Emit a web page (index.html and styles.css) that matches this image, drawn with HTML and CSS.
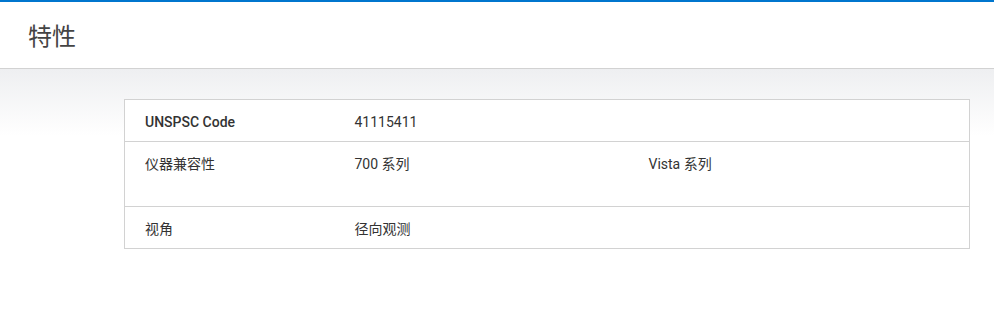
FILE: index.html
```html
<!DOCTYPE html>
<html lang="zh-CN">
<head>
  <meta charset="UTF-8">
  <title>特性</title>
  <link rel="stylesheet" href="styles.css">
</head>
<body>

<div class="page-head">
  <h1>特性</h1>
</div>

<div class="specs">
  <table class="spec-table">
    <colgroup>
      <col class="col-label">
      <col class="col-value">
      <col>
    </colgroup>
    <tr>
      <th>UNSPSC Code</th>
      <td>41115411</td>
      <td></td>
    </tr>
    <tr class="tall">
      <td>仪器兼容性</td>
      <td>700 系列</td>
      <td>Vista 系列</td>
    </tr>
    <tr>
      <td>视角</td>
      <td>径向观测</td>
      <td></td>
    </tr>
  </table>
</div>

</body>
</html>
```

FILE: styles.css
```css
body {
  margin: 0;
  font-family: Roboto, "Noto Sans CJK SC", sans-serif;
  font-size: 14px;
  color: #333;
  background: #fff;
}
.page-head {
  border-top: 2px solid #0076ce;
  border-bottom: 1px solid #d2d2d2;
  height: 66px;
  padding-left: 28px;
  display: flex;
  align-items: center;
}
.page-head h1 {
  margin: 0 0 2px 0;
  font-weight: normal;
  font-size: 24px;
  color: #444;
}
.specs {
  background: linear-gradient(#eeeff1, #fff 67px);
  padding: 30px 24px 60px 124px;
}
.spec-table {
  width: 100%;
  table-layout: fixed;
  border-collapse: collapse;
  background: #fff;
  border: 1px solid #d2d2d2;
}
.col-label {
  width: 230px;
}
.col-value {
  width: 294px;
}
.spec-table tr {
  border-top: 1px solid #d2d2d2;
}
.spec-table th,
.spec-table td {
  text-align: left;
  vertical-align: top;
  padding: 14px 0 11px 0;
  height: 16px;
  line-height: 16px;
}
.spec-table th {
  font-weight: 500;
  padding-left: 20px;
}
.spec-table td:first-child {
  padding-left: 20px;
}
.spec-table tr.tall td {
  height: 39px;
}
```
